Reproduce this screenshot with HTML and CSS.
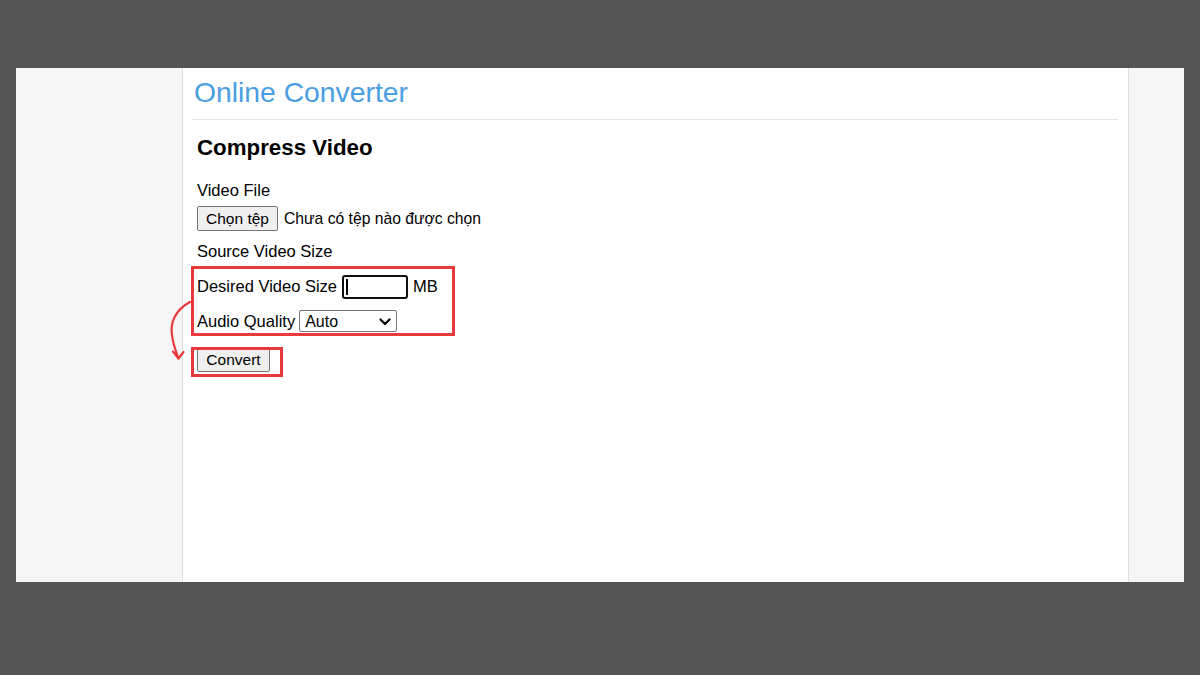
FILE: index.html
```html
<!DOCTYPE html>
<html lang="vi">
<head>
<meta charset="utf-8">
<title>Online Converter - Compress Video</title>
<link rel="stylesheet" href="styles.css">
</head>
<body>
<div class="frame">
  <aside class="side side-left"></aside>
  <main class="main">
    <header class="header">
      <h1 class="brand">Online Converter</h1>
    </header>
    <section class="form">
      <h2 class="form-title">Compress Video</h2>
      <div class="row row-label">Video File</div>
      <div class="row row-file">
        <button class="btn btn-file" type="button">Chọn tệp</button>
        <span class="file-status">Chưa có tệp nào được chọn</span>
      </div>
      <div class="row row-source">Source Video Size</div>
      <div class="row row-desired">
        <span class="label">Desired Video Size</span>
        <span class="input-wrap"><input class="text-input" type="text"></span>
        <span class="unit">MB</span>
      </div>
      <div class="row row-audio">
        <span class="label">Audio Quality</span>
        <span class="select-wrap">
          <select class="select">
            <option>Auto</option>
          </select>
          <svg class="chevron" width="12" height="8" viewBox="0 0 12 8" fill="none" stroke="#000" stroke-width="2.2" stroke-linecap="round" stroke-linejoin="round"><path d="M1.5 1.5 L6 6 L10.5 1.5"/></svg>
        </span>
      </div>
      <div class="row row-convert">
        <button class="btn btn-convert" type="button">Convert</button>
      </div>
    </section>
  </main>
  <aside class="side side-right"></aside>

  <div class="mark mark-fields"></div>
  <div class="mark mark-convert"></div>
  <svg class="mark-arrow" width="40" height="75" viewBox="0 0 40 75" fill="none" stroke="#e8393c" stroke-width="2.2" stroke-linecap="round" stroke-linejoin="round">
    <path d="M25 7 C 10 15, 5 28, 7 40 C 8 49, 11 57, 13.5 63.5"/>
    <path d="M8 56.5 L13.5 63.5 L18.5 57"/>
  </svg>
</div>
</body>
</html>
```

FILE: styles.css
```css
html, body {
  margin: 0;
  padding: 0;
}

body {
  background: #555555;
  width: 1200px;
  height: 675px;
  overflow: hidden;
  font-family: "Liberation Sans", Arial, sans-serif;
  color: #000;
}

.frame {
  position: relative;
  margin: 68px 0 0 16px;
  width: 1168px;
  height: 514px;
  display: grid;
  grid-template-columns: 166px 947px 55px;
  background: #ffffff;
}

.side {
  background: #f6f6f6;
}

.main {
  background: #ffffff;
  border-left: 1px solid #dedede;
  border-right: 1px solid #dedede;
  padding: 0 10px 0 9px;
  display: flex;
  flex-direction: column;
}

.header {
  padding-top: 8px;
  border-bottom: 1px solid #e4e4e4;
  padding-bottom: 11px;
}

.brand {
  margin: 0 0 0 2px;
  font-size: 28.3px;
  line-height: 32px;
  font-weight: normal;
  color: #4a9ee2;
}

.form {
  padding-left: 5px;
  display: flex;
  flex-direction: column;
}

.form-title {
  margin: 15px 0 0 0;
  font-size: 22.3px;
  line-height: 25px;
  font-weight: bold;
}

.row {
  display: flex;
  align-items: center;
  height: 24px;
  font-size: 16.5px;
  white-space: nowrap;
}

.row-label { margin-top: 18px; }
.row-file { margin-top: 4px; height: 25px; }
.row-source { margin-top: 8px; }
.row-desired { margin-top: 12px; align-items: flex-start; }
.row-desired .label,
.row-desired .unit { line-height: 22px; }
.row-audio { margin-top: 11px; height: 22px; }
.row-convert { margin-top: 16px; }

.btn {
  font-family: "Liberation Sans", Arial, sans-serif;
  font-size: 15.5px;
  color: #000;
  background: #efefef;
  border: 1px solid #767676;
  border-radius: 2px;
  padding: 0 8px;
  margin: 0;
}

.btn-file {
  width: 81px;
  height: 25px;
}

.btn-convert {
  width: 73px;
  height: 24px;
}

.file-status {
  margin-left: 6px;
  font-size: 15.7px;
}

.input-wrap {
  position: relative;
  display: inline-flex;
  margin-left: 5px;
}

.input-wrap::after {
  content: "";
  position: absolute;
  left: 4px;
  top: 4px;
  width: 1.5px;
  height: 16px;
  background: #000;
}

.text-input {
  box-sizing: border-box;
  width: 66px;
  height: 24px;
  margin: 0;
  border: 2px solid #101010;
  border-radius: 3px;
  outline: none;
  background: #fff;
  padding: 0 3px;
  font-size: 15px;
}

.unit {
  margin-left: 5px;
}

.select-wrap {
  position: relative;
  display: inline-flex;
  margin-left: 4px;
}

.select {
  box-sizing: border-box;
  width: 98px;
  height: 22px;
  margin: 0;
  font-family: "Liberation Sans", Arial, sans-serif;
  font-size: 16px;
  color: #000;
  background: #fff;
  border: 1px solid #767676;
  border-radius: 2px;
  padding: 0 0 0 5px;
  appearance: none;
  -webkit-appearance: none;
}

.chevron {
  position: absolute;
  right: 6px;
  top: 8px;
  pointer-events: none;
}

.mark {
  position: absolute;
  box-sizing: border-box;
  border: 3px solid #e8393c;
  pointer-events: none;
}

.mark-fields {
  left: 175px;
  top: 198px;
  width: 264px;
  height: 70px;
}

.mark-convert {
  left: 175px;
  top: 279px;
  width: 92px;
  height: 30px;
}

.mark-arrow {
  position: absolute;
  left: 149px;
  top: 227px;
}
```
